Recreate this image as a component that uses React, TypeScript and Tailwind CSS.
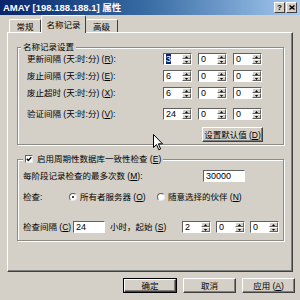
import React from "react";

const SpinArrow = ({ up }: { up?: boolean }) => (
  <svg width="3" height="2" viewBox="0 0 3 2" className="block">
    {up ? <polygon points="1.5,0 3,2 0,2" fill="#000" /> : <polygon points="0,0 3,0 1.5,2" fill="#000" />}
  </svg>
);

const SpinBtn = ({ up }: { up?: boolean }) => (
  <div className="h-[5px] w-[9px] bg-[#d4d0c8] border-r border-b border-r-[#606060] border-b-[#606060] border-t border-l border-t-white border-l-white box-border flex items-center justify-center overflow-hidden">
    <SpinArrow up={up} />
  </div>
);

const Spin = ({ v, sel }: { v: string; sel?: boolean }) => (
  <div className="flex w-[29px] h-[12px] bg-white border border-t-[#606060] border-l-[#606060] border-b-white border-r-white box-border">
    <div className="flex-1 pl-[2px] text-[9px] leading-[10px] overflow-hidden">
      {sel ? <span className="bg-[#0a246a] text-white">{v}</span> : v}
    </div>
    <div className="flex flex-col w-[9px]">
      <SpinBtn up />
      <SpinBtn />
    </div>
  </div>
);

const TextBox = ({ v, w }: { v: string; w: string }) => (
  <div className={`${w} h-[12px] bg-white border border-t-[#606060] border-l-[#606060] border-b-white border-r-white box-border pl-[2px] text-[9px] leading-[10px]`}>
    {v}
  </div>
);

const Btn = ({ children, w, def }: { children: React.ReactNode; w: string; def?: boolean }) => (
  <div className={`${w} h-[15px] box-border ${def ? "border border-black" : ""}`}>
    <div className="w-full h-full box-border border border-t-white border-l-white border-r-[#404040] border-b-[#404040] shadow-[inset_-1px_-1px_0_#808080] flex items-center justify-center text-[8.5px] leading-[10px] whitespace-nowrap">
      {children}
    </div>
  </div>
);

const TimeRow = ({ label, vals, mt, selFirst }: { label: React.ReactNode; vals: string[]; mt: string; selFirst?: boolean }) => (
  <div className={`flex items-center h-[12px] pl-[9px] ${mt}`}>
    <div className="w-[136px] whitespace-nowrap leading-[12px]">{label}</div>
    <div className="flex gap-[6px]">
      {vals.map((v, i) => (
        <Spin key={i} v={v} sel={selFirst && i === 0} />
      ))}
    </div>
  </div>
);

const Radio = ({ on }: { on?: boolean }) => (
  <div className="w-[8px] h-[8px] rounded-full bg-white border border-t-[#606060] border-l-[#606060] border-b-[#e8e8e8] border-r-[#e8e8e8] box-border flex items-center justify-center">
    {on && <div className="w-[2px] h-[2px] rounded-full bg-black" />}
  </div>
);

export default function App() {
  return (
    <div className="w-[300px] h-[300px] bg-[#d4d0c8] relative overflow-hidden flex flex-col text-black text-[8.5px] font-['Liberation_Sans','Noto_Sans_CJK_SC',sans-serif]">
      {/* title bar */}
      <div className="h-[15px] flex items-center justify-between pl-[3px] pr-[3px] bg-linear-to-r from-[#0a246a] via-[#3a6ea5] to-[#a6caf0]">
        <span className="text-white font-bold text-[9.5px] leading-[12px] whitespace-nowrap">AMAY [198.188.188.1] 属性</span>
        <div className="flex gap-[1px]">
          <div className="w-[11px] h-[11px] box-border bg-[#d4d0c8] border border-t-white border-l-white border-r-[#404040] border-b-[#404040] flex items-center justify-center text-[8px] font-bold leading-[8px]">?</div>
          <div className="w-[11px] h-[11px] box-border bg-[#d4d0c8] border border-t-white border-l-white border-r-[#404040] border-b-[#404040] flex items-center justify-center">
            <svg width="6" height="5" viewBox="0 0 6 5">
              <path d="M0.5 0.5 L5.5 4.5 M5.5 0.5 L0.5 4.5" stroke="#000" strokeWidth="1.4" />
            </svg>
          </div>
        </div>
      </div>

      {/* tabs */}
      <div className="h-[17px] flex items-end pl-[9px] relative z-10">
        <div className="w-[32px] h-[13px] box-border border-t border-l border-r border-t-white border-l-white border-r-[#404040] rounded-t-[2px] flex items-center justify-center leading-[12px] pt-[1px]">常规</div>
        <div className="w-[45px] h-[18px] -mb-[1px] box-border bg-[#d4d0c8] border-t border-l border-r border-t-white border-l-white border-r-[#404040] rounded-t-[2px] flex items-start pt-[3px] justify-center leading-[12px]">名称记录</div>
        <div className="w-[32px] h-[13px] box-border border-t border-r border-t-white border-r-[#404040] rounded-t-[2px] flex items-center justify-center leading-[12px] pt-[1px]">高级</div>
      </div>

      {/* panel */}
      <div className="ml-[7px] w-[286px] h-[240px] box-border border border-t-white border-l-white border-r-[#404040] border-b-[#404040] shadow-[inset_-1px_-1px_0_#808080] flex flex-col">
        <fieldset className="mt-[8px] ml-[9px] w-[267px] box-border border border-[#8c8a85] shadow-[inset_1px_1px_0_#fff,1px_1px_0_#fff] pb-[2px]">
          <legend className="ml-[3px] px-[2px] leading-[12px] bg-[#d4d0c8]">名称记录设置</legend>
          <TimeRow mt="mt-0" selFirst label={<>更新间隔 (天:时:分) (<u>R</u>):</>} vals={["3", "0", "0"]} />
          <TimeRow mt="mt-[5px]" label={<>废止间隔 (天:时:分) (<u>E</u>):</>} vals={["6", "0", "0"]} />
          <TimeRow mt="mt-[5px]" label={<>废止超时 (天:时:分) (<u>X</u>):</>} vals={["6", "0", "0"]} />
          <TimeRow mt="mt-[9px]" label={<>验证间隔 (天:时:分) (<u>V</u>):</>} vals={["24", "0", "0"]} />
          <div className="mt-[7px] ml-[184px]">
            <Btn w="w-[61px]">设置默认值 (<u>D</u>)</Btn>
          </div>
        </fieldset>

        <fieldset className="mt-[8px] ml-[9px] w-[267px] box-border border border-[#8c8a85] shadow-[inset_1px_1px_0_#fff,1px_1px_0_#fff] pb-[7px]">
          <legend className="ml-[5px] px-[2px] leading-[12px] bg-[#d4d0c8] flex items-center gap-[4px]">
            <div className="w-[8px] h-[8px] bg-white box-border border border-t-[#606060] border-l-[#606060] border-b-[#e8e8e8] border-r-[#e8e8e8] flex items-center justify-center">
              <svg width="6" height="6" viewBox="0 0 6 6">
                <path d="M0.8 2.8 L2.3 4.5 L5.3 1.2" stroke="#000" strokeWidth="1.3" fill="none" />
              </svg>
            </div>
            <span className="whitespace-nowrap">启用周期性数据库一致性检查 (<u>E</u>)</span>
          </legend>
          <div className="mt-[5px] pl-[5px] flex items-center h-[12px]">
            <div className="w-[180px] whitespace-nowrap">每阶段记录检查的最多次数 (<u>M</u>):</div>
            <TextBox v="30000" w="w-[42px]" />
          </div>
          <div className="mt-[9px] pl-[5px] flex items-center h-[12px]">
            <div className="w-[46px] whitespace-nowrap">检查:</div>
            <div className="w-[88px] flex items-center gap-[3px] whitespace-nowrap">
              <Radio on />
              <span>所有者服务器 (<u>O</u>)</span>
            </div>
            <div className="flex items-center gap-[3px] whitespace-nowrap">
              <Radio />
              <span>随意选择的伙伴 (<u>N</u>)</span>
            </div>
          </div>
          <div className="mt-[18px] pl-[5px] flex items-center h-[12px]">
            <div className="w-[50px] whitespace-nowrap">检查间隔 (<u>C</u>)</div>
            <TextBox v="24" w="w-[32px]" />
            <div className="ml-[5px] w-[72px] whitespace-nowrap">小时，起始 (<u>S</u>)</div>
            <div className="flex gap-[5px]">
              <Spin v="2" />
              <Spin v="0" />
              <Spin v="0" />
            </div>
          </div>
        </fieldset>
      </div>

      {/* buttons */}
      <div className="mt-[6px] pl-[123px] flex gap-[6px]">
        <Btn w="w-[54px]" def>确定</Btn>
        <Btn w="w-[53px]">取消</Btn>
        <Btn w="w-[53px]">应用 (<u>A</u>)</Btn>
      </div>

      {/* mouse cursor */}
      <svg className="absolute left-[153px] top-[134px]" width="11" height="17" viewBox="0 0 11 17">
        <path d="M0.5 0.5 L0.5 13.5 L3.5 10.5 L5.8 15.8 L7.6 15 L5.4 9.8 L9.5 9.8 Z" fill="#fff" stroke="#000" strokeWidth="1" />
      </svg>
    </div>
  );
}
